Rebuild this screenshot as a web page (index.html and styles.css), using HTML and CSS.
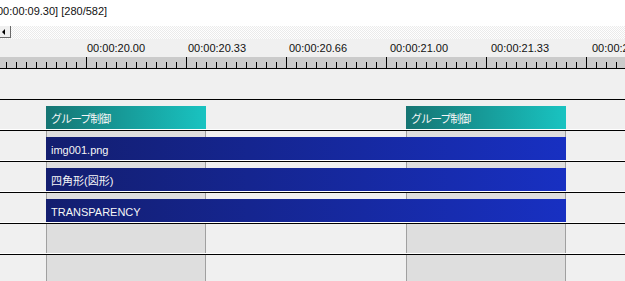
FILE: index.html
```html
<!DOCTYPE html>
<html lang="ja">
<head>
<meta charset="utf-8">
<title>Timeline</title>
<link rel="stylesheet" href="styles.css">
</head>
<body>
<div class="app">
  <div class="status"><span class="pos">00:00:09.30] [280/582]</span></div>
  <div class="scroll">
    <div class="sbtn"><span class="tri"></span></div>
  </div>
  <div class="labels">
    <span class="lbl">00:00:20.00</span>
    <span class="lbl">00:00:20.33</span>
    <span class="lbl">00:00:20.66</span>
    <span class="lbl">00:00:21.00</span>
    <span class="lbl">00:00:21.33</span>
    <span class="lbl">00:00:21.66</span>
  </div>
  <div class="ruler"></div>
  <div class="spacer"></div>
  <div class="layers">
    <div class="row">
      <div class="clip group" style="left:46px;width:160px">グループ制御</div>
      <div class="clip group" style="left:406px;width:160px">グループ制御</div>
    </div>
    <div class="row">
      <div class="shade" style="left:46px;width:160px"></div>
      <div class="shade" style="left:406px;width:160px"></div>
      <div class="clip obj" style="left:46px;width:520px">img001.png</div>
    </div>
    <div class="row">
      <div class="shade" style="left:46px;width:160px"></div>
      <div class="shade" style="left:406px;width:160px"></div>
      <div class="clip obj" style="left:46px;width:520px">四角形(図形)</div>
    </div>
    <div class="row">
      <div class="shade" style="left:46px;width:160px"></div>
      <div class="shade" style="left:406px;width:160px"></div>
      <div class="clip obj" style="left:46px;width:520px">TRANSPARENCY</div>
    </div>
    <div class="row">
      <div class="shade" style="left:46px;width:160px"></div>
      <div class="shade" style="left:406px;width:160px"></div>
    </div>
    <div class="row">
      <div class="shade" style="left:46px;width:160px"></div>
      <div class="shade" style="left:406px;width:160px"></div>
    </div>
  </div>
</div>
</body>
</html>
```
FILE: styles.css
```css
html, body {
  margin: 0;
  padding: 0;
}
body {
  width: 625px;
  height: 281px;
  overflow: hidden;
  background: #f0f0f0;
  font-family: "Liberation Sans", "Noto Sans CJK JP", sans-serif;
}
.app {
  display: flex;
  flex-direction: column;
  width: 625px;
}
.status {
  height: 26px;
  background: #fff;
  font-size: 11px;
  line-height: 1;
  color: #111;
  white-space: nowrap;
  overflow: hidden;
}
.pos {
  display: block;
  margin-left: -3px;
  padding-top: 6px;
}
.scroll {
  height: 13px;
  background: repeating-conic-gradient(#ffffff 0 25%, #ebebeb 0 50%) 0 0 / 2px 2px;
  display: flex;
}
.sbtn {
  width: 11px;
  height: 12px;
  box-sizing: border-box;
  background: #f0f0f0;
  border-right: 1px solid #6a6a6a;
  border-bottom: 1px solid #6a6a6a;
  display: flex;
  align-items: center;
  padding-left: 2px;
}
.tri {
  width: 0;
  height: 0;
  border-top: 3px solid transparent;
  border-bottom: 3px solid transparent;
  border-right: 3px solid #000;
}
.labels {
  height: 18px;
  display: flex;
  padding-left: 86px;
  white-space: nowrap;
  overflow: hidden;
  font-size: 11px;
  line-height: 18px;
  color: #111;
}
.lbl {
  flex: 0 0 100px;
  padding-top: 1px;
  padding-left: 1px;
  line-height: 17px;
}
.ruler {
  height: 11px;
  border-bottom: 1px solid #000;
  background:
    linear-gradient(to right, #000 1px, transparent 1px) 86px 0 / 100px 11px repeat-x,
    linear-gradient(to right, #000 1px, transparent 1px) 6px 5px / 10px 6px repeat-x,
    #cbcbcb;
}
.spacer {
  height: 30px;
}
.layers {
  display: flex;
  flex-direction: column;
}
.row {
  position: relative;
  flex: 0 0 auto;
  height: 29px;
  border-top: 1px solid #000;
  border-bottom: 1px solid #fff;
}
.shade {
  position: absolute;
  top: 0;
  height: 29px;
  box-sizing: border-box;
  background: #dedede;
  border-left: 1px solid #a0a0a0;
  border-right: 1px solid #a0a0a0;
}
.clip {
  position: absolute;
  top: 6px;
  height: 23px;
  padding: 3px 0 0 5px;
  box-sizing: border-box;
  font-size: 11px;
  line-height: 20px;
  color: #f6f6f6;
  white-space: nowrap;
  overflow: hidden;
}
.clip.group {
  letter-spacing: -1px;
  background: linear-gradient(to right, #157573, #19c3c1);
}
.clip.obj {
  background: linear-gradient(to right, #131e6f, #1830c2);
}
```
